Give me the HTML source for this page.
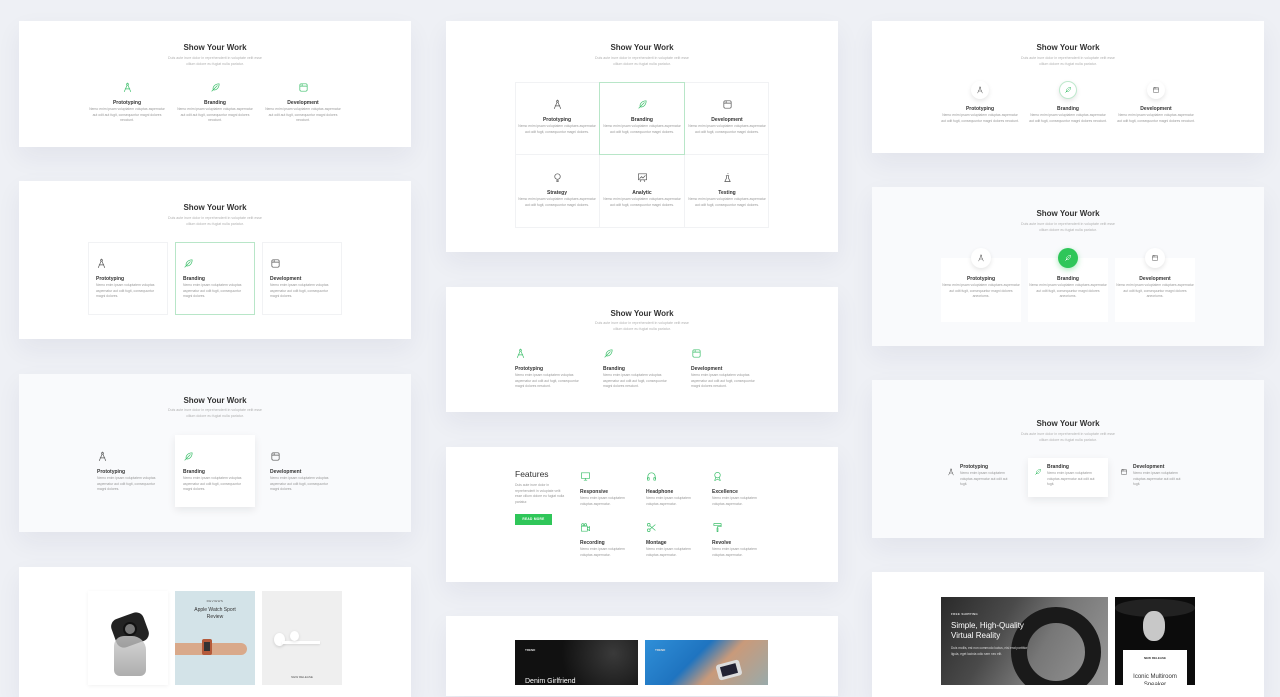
<!DOCTYPE html>
<html><head><meta charset="utf-8"><style>
*{margin:0;padding:0;box-sizing:border-box}
body{width:1280px;height:685px;overflow:hidden;background:#eef0f5;position:relative;font-family:"Liberation Sans",sans-serif}
.c{position:absolute;background:#fff;box-shadow:0 10px 24px rgba(30,40,90,.06)}
.g{background:#f9fafc}
.a{position:absolute}
.t{position:absolute;text-align:center;font-weight:bold;font-size:8px;line-height:10px;color:#333;width:392px}
.s{position:absolute;text-align:center;font-size:3.6px;line-height:6px;color:#b0b0b0;width:392px}
.s span{display:block}
.i{position:absolute;width:80px}
.i svg{display:block;width:11px;height:11px}
.ctr{text-align:center}.ctr svg{margin:0 auto}
.h{font-size:5px;line-height:7px;font-weight:bold;color:#333;margin-top:7px}
.p{font-size:3.4px;line-height:5.5px;color:#999}
.bx{position:absolute;border:1px solid #f1f2f4}
svg{fill:none;stroke-width:1.5;stroke-linecap:round;stroke-linejoin:round}
.gr{stroke:#3dbf6b}.dk{stroke:#555}
.circ{width:18px;height:18px;border-radius:50%;background:#fff;box-shadow:0 2px 5px rgba(0,0,0,.1);margin:0 auto;display:flex;align-items:center;justify-content:center}
.circ svg{width:8px;height:8px}
</style></head><body>
<svg width="0" height="0" style="position:absolute"><defs>
<g id="cp"><circle cx="12" cy="5" r="2"/><path d="M12 2v1M11 7L5 21M13 7l6 14M7 15h10"/></g>
<g id="fe"><path d="M4 20L16 8M7 17c-2-6 4-13 13-13 0 9-7 15-13 13z"/></g>
<g id="wi"><rect x="4" y="4" width="16" height="16" rx="3"/><path d="M4 9h16M9 4v5"/></g>
</defs></svg>

<!-- Left column -->
<div class="c" style="left:19px;top:21px;width:392px;height:126px"></div>
<div class="t" style="left:19px;top:43px">Show Your Work</div>
<div class="s" style="left:19px;top:55px"><span>Duis aute irure dolor in reprehenderit in voluptate velit esse</span><span>cillum dolore eu fugiat nulla pariatur.</span></div>
<div class="i ctr" style="left:87px;top:82px"><svg class="gr" viewBox="0 0 24 24"><use href="#cp"/></svg><div class="h">Prototyping</div><div class="p">Nemo enim ipsam voluptatem voluptas aspernatur aut odit aut fugit, consequuntur magni dolores neociunt.</div></div>
<div class="i ctr" style="left:175px;top:82px"><svg class="gr" viewBox="0 0 24 24"><use href="#fe"/></svg><div class="h">Branding</div><div class="p">Nemo enim ipsam voluptatem voluptas aspernatur aut odit aut fugit, consequuntur magni dolores neociunt.</div></div>
<div class="i ctr" style="left:263px;top:82px"><svg class="gr" viewBox="0 0 24 24"><use href="#wi"/></svg><div class="h">Development</div><div class="p">Nemo enim ipsam voluptatem voluptas aspernatur aut odit aut fugit, consequuntur magni dolores neociunt.</div></div>

<div class="c" style="left:19px;top:181px;width:392px;height:158px"></div>
<div class="t" style="left:19px;top:203px">Show Your Work</div>
<div class="s" style="left:19px;top:215px"><span>Duis aute irure dolor in reprehenderit in voluptate velit esse</span><span>cillum dolore eu fugiat nulla pariatur.</span></div>
<div class="bx" style="left:88px;top:242px;width:80px;height:73px"></div>
<div class="bx" style="left:175px;top:242px;width:80px;height:73px;border-color:#b8e6c8"></div>
<div class="bx" style="left:262px;top:242px;width:80px;height:73px"></div>
<div class="i" style="left:96px;top:258px;width:68px"><svg class="dk" viewBox="0 0 24 24"><use href="#cp"/></svg><div class="h">Prototyping</div><div class="p">Nemo enim ipsam voluptatem voluptas aspernatur aut odit fugit, consequuntur magni dolores.</div></div>
<div class="i" style="left:183px;top:258px;width:68px"><svg class="gr" viewBox="0 0 24 24"><use href="#fe"/></svg><div class="h">Branding</div><div class="p">Nemo enim ipsam voluptatem voluptas aspernatur aut odit fugit, consequuntur magni dolores.</div></div>
<div class="i" style="left:270px;top:258px;width:68px"><svg class="dk" viewBox="0 0 24 24"><use href="#wi"/></svg><div class="h">Development</div><div class="p">Nemo enim ipsam voluptatem voluptas aspernatur aut odit fugit, consequuntur magni dolores.</div></div>

<div class="c g" style="left:19px;top:374px;width:392px;height:158px"></div>
<div class="t" style="left:19px;top:396px">Show Your Work</div>
<div class="s" style="left:19px;top:407px"><span>Duis aute irure dolor in reprehenderit in voluptate velit esse</span><span>cillum dolore eu fugiat nulla pariatur.</span></div>
<div class="a" style="left:175px;top:435px;width:80px;height:72px;background:#fff;box-shadow:0 3px 8px rgba(0,0,0,.08)"></div>
<div class="i" style="left:97px;top:451px;width:66px"><svg class="dk" viewBox="0 0 24 24"><use href="#cp"/></svg><div class="h">Prototyping</div><div class="p">Nemo enim ipsam voluptatem voluptas aspernatur aut odit fugit, consequuntur magni dolores.</div></div>
<div class="i" style="left:183px;top:451px;width:66px"><svg class="gr" viewBox="0 0 24 24"><use href="#fe"/></svg><div class="h">Branding</div><div class="p">Nemo enim ipsam voluptatem voluptas aspernatur aut odit fugit, consequuntur magni dolores.</div></div>
<div class="i" style="left:270px;top:451px;width:66px"><svg class="dk" viewBox="0 0 24 24"><use href="#wi"/></svg><div class="h">Development</div><div class="p">Nemo enim ipsam voluptatem voluptas aspernatur aut odit fugit, consequuntur magni dolores.</div></div>

<div class="c" style="left:19px;top:567px;width:392px;height:130px"></div>
<div class="a" style="left:88px;top:591px;width:80px;height:94px;background:#fff;box-shadow:0 1px 4px rgba(0,0,0,.06)">
 <div class="a" style="left:25px;top:24px;width:34px;height:30px;background:#222;border-radius:8px;transform:rotate(-20deg)"></div>
 <div class="a" style="left:35px;top:31px;width:14px;height:14px;border-radius:50%;background:#777;border:2px solid #111"></div>
 <div class="a" style="left:26px;top:45px;width:32px;height:40px;background:linear-gradient(#ccc,#999);border-radius:10px 14px 6px 6px;opacity:.8"></div>
</div>
<div class="a" style="left:175px;top:591px;width:80px;height:94px;background:#d3e3e8">
 <div class="a" style="left:0;top:8px;width:80px;text-align:center;font-size:3px;letter-spacing:.4px;color:#555">REVIEWS</div>
 <div class="a" style="left:0;top:16px;width:80px;text-align:center;font-size:5px;line-height:7px;color:#333">Apple Watch Sport<br>Review</div>
 <div class="a" style="left:0;top:52px;width:72px;height:12px;background:#d9a98a;border-radius:0 8px 8px 0"></div>
 <div class="a" style="left:27px;top:48px;width:10px;height:16px;background:#b45a3a;border-radius:2px"></div>
 <div class="a" style="left:29px;top:51px;width:6px;height:9px;background:#333"></div>
</div>
<div class="a" style="left:262px;top:591px;width:80px;height:94px;background:#efefef">
 <div class="a" style="left:12px;top:42px;width:11px;height:13px;background:#fff;border-radius:50%;box-shadow:0 1px 3px rgba(0,0,0,.15)"></div>
 <div class="a" style="left:20px;top:50px;width:38px;height:3px;background:#fff;box-shadow:0 1px 2px rgba(0,0,0,.1)"></div>
 <div class="a" style="left:28px;top:40px;width:9px;height:10px;background:#fff;border-radius:50%;box-shadow:0 1px 3px rgba(0,0,0,.12)"></div>
 <div class="a" style="left:0;top:84px;width:80px;text-align:center;font-size:3px;color:#555">NEW RELEASE</div>
</div>

<!-- Middle column -->
<div class="c" style="left:446px;top:21px;width:392px;height:231px"></div>
<div class="t" style="left:446px;top:43px">Show Your Work</div>
<div class="s" style="left:446px;top:55px"><span>Duis aute irure dolor in reprehenderit in voluptate velit esse</span><span>cillum dolore eu fugiat nulla pariatur.</span></div>
<div class="bx" style="left:515px;top:82px;width:254px;height:146px"></div>
<div class="a" style="left:515px;top:154px;width:254px;height:1px;background:#f1f2f4"></div>
<div class="a" style="left:599px;top:82px;width:1px;height:146px;background:#f1f2f4"></div>
<div class="a" style="left:684px;top:82px;width:1px;height:146px;background:#f1f2f4"></div>
<div class="bx" style="left:599px;top:82px;width:86px;height:73px;border-color:#b8e6c8"></div>
<div class="i ctr" style="left:517px;top:99px"><svg class="dk" viewBox="0 0 24 24"><use href="#cp"/></svg><div class="h">Prototyping</div><div class="p">Nemo enim ipsam voluptatem voluptaes aspernatur aut odit fugit, consequuntur magni dolores.</div></div>
<div class="i ctr" style="left:602px;top:99px"><svg class="gr" viewBox="0 0 24 24"><use href="#fe"/></svg><div class="h">Branding</div><div class="p">Nemo enim ipsam voluptatem voluptaes aspernatur aut odit fugit, consequuntur magni dolores.</div></div>
<div class="i ctr" style="left:687px;top:99px"><svg class="dk" viewBox="0 0 24 24"><use href="#wi"/></svg><div class="h">Development</div><div class="p">Nemo enim ipsam voluptatem voluptaes aspernatur aut odit fugit, consequuntur magni dolores.</div></div>
<div class="i ctr" style="left:517px;top:172px"><svg class="dk" viewBox="0 0 24 24"><circle cx="12" cy="10" r="6"/><path d="M10 18h4M10 21h4"/></svg><div class="h">Strategy</div><div class="p">Nemo enim ipsam voluptatem voluptaes aspernatur aut odit fugit, consequuntur magni dolores.</div></div>
<div class="i ctr" style="left:602px;top:172px"><svg class="dk" viewBox="0 0 24 24"><rect x="3" y="4" width="18" height="13"/><path d="M6 14l4-4 3 3 5-5M9 17l-2 4M15 17l2 4"/></svg><div class="h">Analytic</div><div class="p">Nemo enim ipsam voluptatem voluptaes aspernatur aut odit fugit, consequuntur magni dolores.</div></div>
<div class="i ctr" style="left:687px;top:172px"><svg class="dk" viewBox="0 0 24 24"><path d="M10 8v5l-4 8h12l-4-8V8M9 8h6M13 3v1"/></svg><div class="h">Testing</div><div class="p">Nemo enim ipsam voluptatem voluptaes aspernatur aut odit fugit, consequuntur magni dolores.</div></div>

<div class="c" style="left:446px;top:287px;width:392px;height:125px"></div>
<div class="t" style="left:446px;top:309px">Show Your Work</div>
<div class="s" style="left:446px;top:320px"><span>Duis aute irure dolor in reprehenderit in voluptate velit esse</span><span>cillum dolore eu fugiat nulla pariatur.</span></div>
<div class="i" style="left:515px;top:348px;width:72px"><svg class="gr" viewBox="0 0 24 24"><use href="#cp"/></svg><div class="h">Prototyping</div><div class="p">Nemo enim ipsam voluptatem voluptas aspernatur aut odit aut fugit, consequuntur magni dolores nesciunt.</div></div>
<div class="i" style="left:603px;top:348px;width:72px"><svg class="gr" viewBox="0 0 24 24"><use href="#fe"/></svg><div class="h">Branding</div><div class="p">Nemo enim ipsam voluptatem voluptas aspernatur aut odit aut fugit, consequuntur magni dolores nesciunt.</div></div>
<div class="i" style="left:691px;top:348px;width:72px"><svg class="gr" viewBox="0 0 24 24"><use href="#wi"/></svg><div class="h">Development</div><div class="p">Nemo enim ipsam voluptatem voluptas aspernatur aut odit aut fugit, consequuntur magni dolores nesciunt.</div></div>

<div class="c" style="left:446px;top:447px;width:392px;height:135px"></div>
<div class="a" style="left:515px;top:469px;font-size:8.5px;color:#333">Features</div>
<div class="a p" style="left:515px;top:483px;width:50px">Duis aute irure dolor in reprehenderit in voluptate velit esse cillum dolore eu fugiat nulla pariatur.</div>
<div class="a" style="left:515px;top:514px;width:37px;height:11px;background:#2fc659;color:#fff;font-size:3.2px;font-weight:bold;text-align:center;line-height:11px;letter-spacing:.3px">READ MORE</div>
<div class="i" style="left:580px;top:471px;width:55px"><svg class="gr" viewBox="0 0 24 24"><rect x="3" y="4" width="18" height="12"/><path d="M9 20h6M12 16v4"/></svg><div class="h">Responsive</div><div class="p">Nemo enim ipsam voluptatem voluptas aspernatur.</div></div>
<div class="i" style="left:646px;top:471px;width:55px"><svg class="gr" viewBox="0 0 24 24"><path d="M4 17v-5a8 8 0 0116 0v5"/><rect x="3" y="14" width="4" height="6" rx="1"/><rect x="17" y="14" width="4" height="6" rx="1"/></svg><div class="h">Headphone</div><div class="p">Nemo enim ipsam voluptatem voluptas aspernatur.</div></div>
<div class="i" style="left:712px;top:471px;width:55px"><svg class="gr" viewBox="0 0 24 24"><circle cx="12" cy="9" r="6"/><path d="M8 14l-2 7 6-3 6 3-2-7"/></svg><div class="h">Excellence</div><div class="p">Nemo enim ipsam voluptatem voluptas aspernatur.</div></div>
<div class="i" style="left:580px;top:522px;width:55px"><svg class="gr" viewBox="0 0 24 24"><rect x="3" y="9" width="13" height="11"/><path d="M16 13l5-3v9l-5-3"/><circle cx="6" cy="6" r="2.5"/><circle cx="12" cy="6" r="2.5"/></svg><div class="h">Recording</div><div class="p">Nemo enim ipsam voluptatem voluptas aspernatur.</div></div>
<div class="i" style="left:646px;top:522px;width:55px"><svg class="gr" viewBox="0 0 24 24"><circle cx="6" cy="6" r="3"/><circle cx="6" cy="18" r="3"/><path d="M8 8l12 10M8 16L20 6"/></svg><div class="h">Montage</div><div class="p">Nemo enim ipsam voluptatem voluptas aspernatur.</div></div>
<div class="i" style="left:712px;top:522px;width:55px"><svg class="gr" viewBox="0 0 24 24"><rect x="4" y="3" width="16" height="5" rx="1"/><path d="M20 6v4h-8v3M11 13h2v8h-2z"/></svg><div class="h">Revolve</div><div class="p">Nemo enim ipsam voluptatem voluptas aspernatur.</div></div>

<div class="c" style="left:446px;top:616px;width:392px;height:80px"></div>
<div class="a" style="left:515px;top:640px;width:123px;height:45px;background:radial-gradient(circle at 80% 30%,#3a3a3a,#111 50%);overflow:hidden">
 <div class="a" style="left:10px;top:8px;font-size:3px;color:#ddd;font-weight:bold">TREND</div>
 <div class="a" style="left:10px;top:38px;font-size:7px;color:#fff">Denim Girlfriend</div>
</div>
<div class="a" style="left:645px;top:640px;width:123px;height:45px;background:linear-gradient(135deg,#2f8fd8 0%,#1f74c0 40%,#c99a7a 60%,#9aa 100%);overflow:hidden">
 <div class="a" style="left:10px;top:8px;font-size:3px;color:#ddd;font-weight:bold">TREND</div>
 <div class="a" style="left:72px;top:22px;width:24px;height:16px;background:#ddd;border-radius:3px;transform:rotate(-15deg)"></div>
 <div class="a" style="left:76px;top:25px;width:16px;height:10px;background:#223;transform:rotate(-15deg)"></div>
</div>

<!-- Right column -->
<div class="c" style="left:872px;top:21px;width:392px;height:132px"></div>
<div class="t" style="left:872px;top:43px">Show Your Work</div>
<div class="s" style="left:872px;top:55px"><span>Duis aute irure dolor in reprehenderit in voluptate velit esse</span><span>cillum dolore eu fugiat nulla pariatur.</span></div>
<div class="i ctr" style="left:940px;top:81px"><div class="circ"><svg class="dk" viewBox="0 0 24 24"><use href="#cp"/></svg></div><div class="h">Prototyping</div><div class="p">Nemo enim ipsam voluptatem voluptas aspernatur aut odit fugit, consequuntur magni dolores neociunt.</div></div>
<div class="i ctr" style="left:1028px;top:81px"><div class="circ" style="border:1px solid #bfe9cd"><svg class="gr" viewBox="0 0 24 24"><use href="#fe"/></svg></div><div class="h">Branding</div><div class="p">Nemo enim ipsam voluptatem voluptas aspernatur aut odit fugit, consequuntur magni dolores neociunt.</div></div>
<div class="i ctr" style="left:1116px;top:81px"><div class="circ"><svg class="dk" viewBox="0 0 24 24"><use href="#wi"/></svg></div><div class="h">Development</div><div class="p">Nemo enim ipsam voluptatem voluptas aspernatur aut odit fugit, consequuntur magni dolores neociunt.</div></div>

<div class="c g" style="left:872px;top:187px;width:392px;height:159px"></div>
<div class="t" style="left:872px;top:209px">Show Your Work</div>
<div class="s" style="left:872px;top:221px"><span>Duis aute irure dolor in reprehenderit in voluptate velit esse</span><span>cillum dolore eu fugiat nulla pariatur.</span></div>
<div class="a" style="left:941px;top:258px;width:80px;height:64px;background:#fff"></div>
<div class="a" style="left:1028px;top:258px;width:80px;height:64px;background:#fff"></div>
<div class="a" style="left:1115px;top:258px;width:80px;height:64px;background:#fff"></div>
<div class="i ctr" style="left:941px;top:248px"><div class="circ" style="width:20px;height:20px"><svg class="dk" viewBox="0 0 24 24"><use href="#cp"/></svg></div><div class="h" style="margin-top:8px">Prototyping</div><div class="p">Nemo enim ipsam voluptatem voluptaes aspernatur aut odit fugit, consequuntur magni dolores aneoriums.</div></div>
<div class="i ctr" style="left:1028px;top:248px"><div class="circ" style="width:20px;height:20px;background:#2fc659;box-shadow:0 2px 6px rgba(47,198,89,.4)"><svg viewBox="0 0 24 24" style="stroke:#fff"><use href="#fe"/></svg></div><div class="h" style="margin-top:8px">Branding</div><div class="p">Nemo enim ipsam voluptatem voluptaes aspernatur aut odit fugit, consequuntur magni dolores aneoriums.</div></div>
<div class="i ctr" style="left:1115px;top:248px"><div class="circ" style="width:20px;height:20px"><svg class="dk" viewBox="0 0 24 24"><use href="#wi"/></svg></div><div class="h" style="margin-top:8px">Development</div><div class="p">Nemo enim ipsam voluptatem voluptaes aspernatur aut odit fugit, consequuntur magni dolores aneoriums.</div></div>

<div class="c g" style="left:872px;top:380px;width:392px;height:158px"></div>
<div class="t" style="left:872px;top:419px">Show Your Work</div>
<div class="s" style="left:872px;top:431px"><span>Duis aute irure dolor in reprehenderit in voluptate velit esse</span><span>cillum dolore eu fugiat nulla pariatur.</span></div>
<div class="a" style="left:1028px;top:458px;width:80px;height:39px;background:#fff;box-shadow:0 3px 8px rgba(0,0,0,.08)"></div>
<div class="a" style="left:947px;top:463px"><svg class="dk" viewBox="0 0 24 24" style="width:8px;height:8px"><use href="#cp"/></svg></div>
<div class="i" style="left:960px;top:464px;width:55px"><div class="h" style="margin-top:0">Prototyping</div><div class="p">Nemo enim ipsam voluptatem voluptas aspernatur aut odit aut fugit.</div></div>
<div class="a" style="left:1034px;top:463px"><svg class="gr" viewBox="0 0 24 24" style="width:8px;height:8px"><use href="#fe"/></svg></div>
<div class="i" style="left:1047px;top:464px;width:55px"><div class="h" style="margin-top:0">Branding</div><div class="p">Nemo enim ipsam voluptatem voluptas aspernatur aut odit aut fugit.</div></div>
<div class="a" style="left:1120px;top:463px"><svg class="dk" viewBox="0 0 24 24" style="width:8px;height:8px"><use href="#wi"/></svg></div>
<div class="i" style="left:1133px;top:464px;width:55px"><div class="h" style="margin-top:0">Development</div><div class="p">Nemo enim ipsam voluptatem voluptas aspernatur aut odit aut fugit.</div></div>

<div class="c" style="left:872px;top:572px;width:392px;height:125px"></div>
<div class="a" style="left:941px;top:597px;width:167px;height:88px;background:linear-gradient(120deg,#2a2a2a 0%,#4a4a4a 35%,#777 60%,#999 100%);overflow:hidden">
 <div class="a" style="left:70px;top:10px;width:90px;height:90px;border-radius:50%;border:16px solid #1a1a1a"></div>
 <div class="a" style="left:10px;top:15px;font-size:3px;color:#ddd;font-weight:bold;letter-spacing:.3px">FREE SHIPPING</div>
 <div class="a" style="left:10px;top:24px;font-size:8px;line-height:10px;color:#fff">Simple, High-Quality<br>Virtual Reality</div>
 <div class="a" style="left:10px;top:48px;font-size:3.2px;line-height:6px;color:#ddd">Duis mollis, est non commodo luctus, nisi erat porttitor<br>ligula, eget lacinia odio sem nec elit.</div>
</div>
<div class="a" style="left:1115px;top:597px;width:80px;height:88px;background:#0c0c0c;overflow:hidden">
 <div class="a" style="left:0;top:2px;width:80px;height:18px;background:#222;border-radius:50%"></div>
 <div class="a" style="left:28px;top:14px;width:22px;height:30px;background:#c8c8c8;border-radius:45%"></div>
 <div class="a" style="left:8px;top:53px;width:64px;height:40px;background:#fff">
  <div class="a" style="left:0;top:6px;width:64px;text-align:center;font-size:3px;color:#333;font-weight:bold">NEW RELEASE</div>
  <div class="a" style="left:0;top:23px;width:64px;text-align:center;font-size:6px;line-height:8px;color:#333">Iconic Multiroom<br>Speaker</div>
 </div>
</div>
</body></html>
